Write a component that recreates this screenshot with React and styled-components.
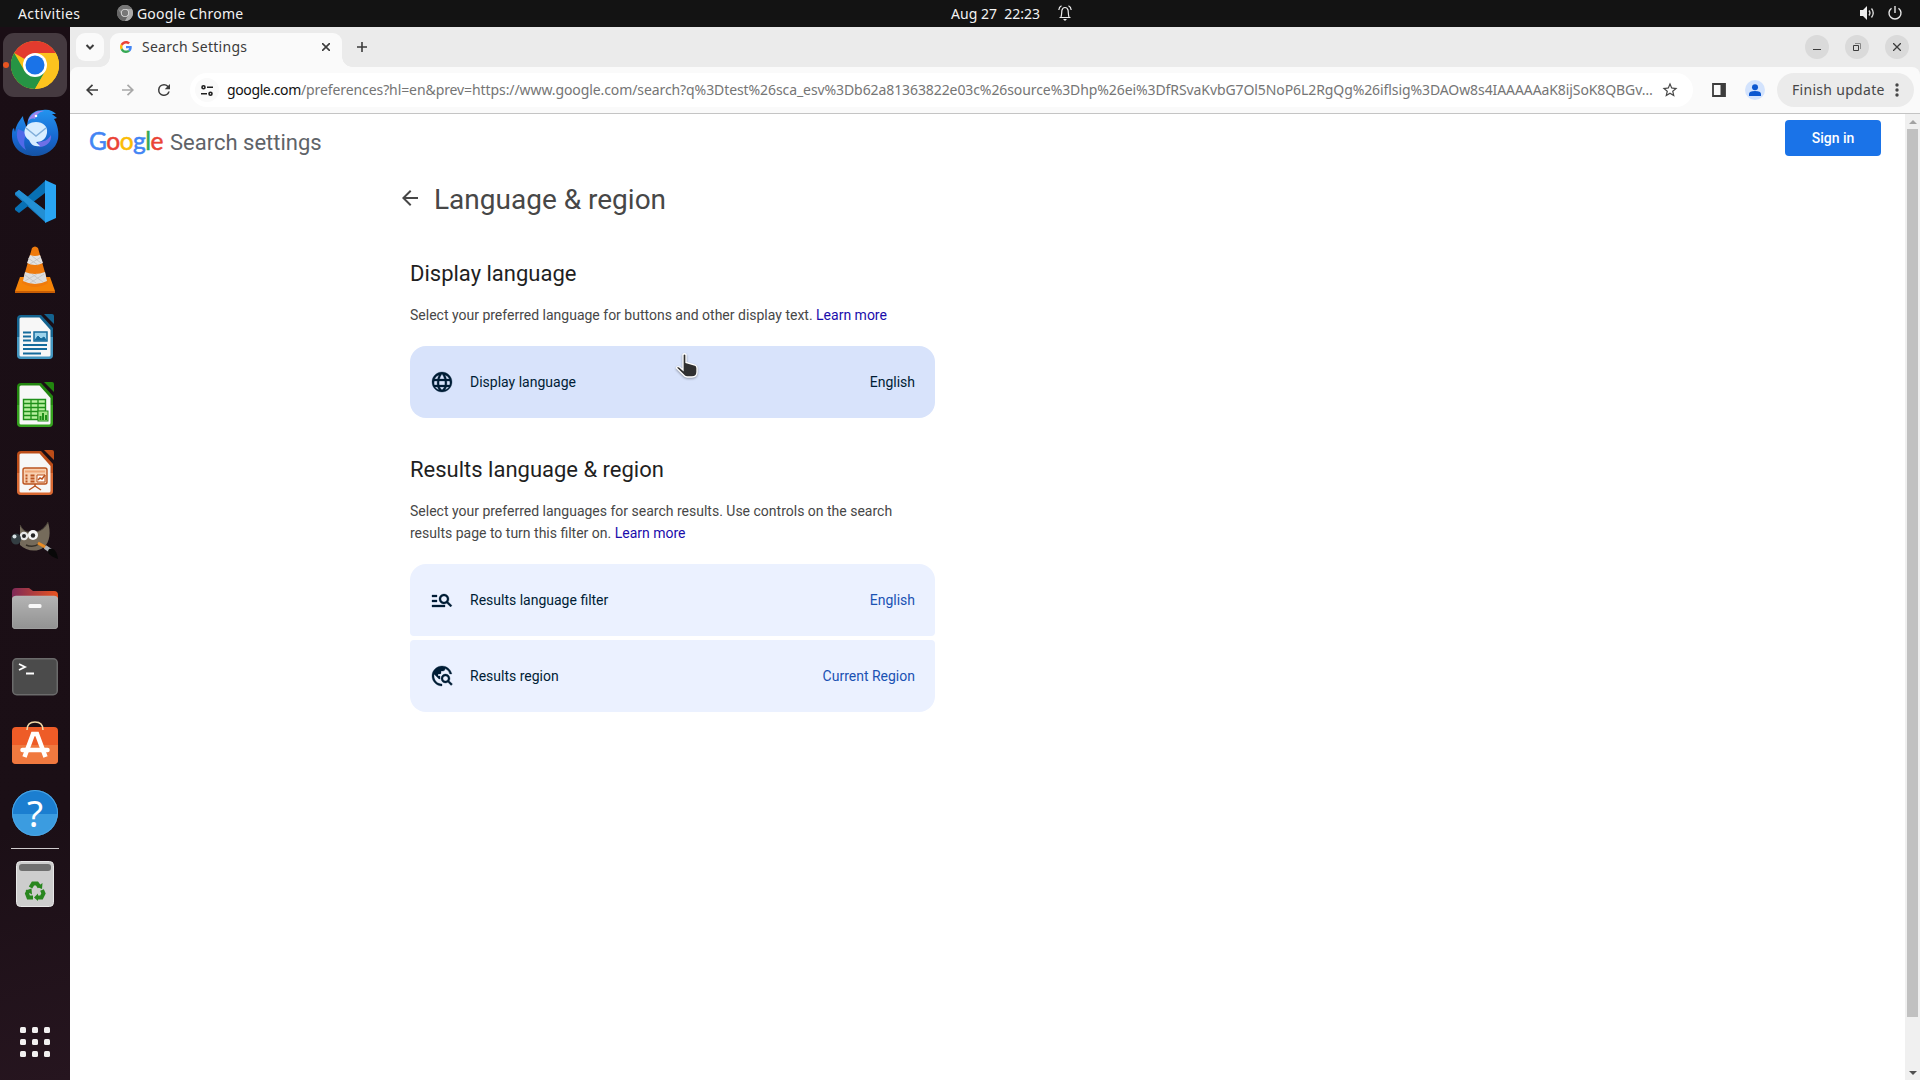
import React from "react";
import styled, { createGlobalStyle } from "styled-components";

const Global = createGlobalStyle`
  *{box-sizing:border-box}
  html,body{margin:0;padding:0;overflow:hidden}
  body{font-family:Roboto,"Liberation Sans",sans-serif;background:#fff}
  h1,h2,p{margin:0;font-weight:400}
  svg{display:block;flex:none}
`;
const ui = `"Noto Sans","Open Sans",sans-serif`;

const Desktop = styled.div`width:1920px;height:1080px;display:flex;flex-direction:column;overflow:hidden;`;
const TopBar = styled.header`height:27px;flex:none;background:#131313;color:#f2f2f2;display:grid;grid-template-columns:1fr auto 1fr;align-items:center;padding-bottom:1px;font-family:${ui};font-size:14px;line-height:25px;`;
const BarGroup = styled.div`display:flex;align-items:center;padding:${p => p.$pad || 0};justify-content:${p => p.$end ? "flex-end" : "flex-start"};gap:${p => p.$gap || 0}px;`;
const Label = styled.span`white-space:pre;display:block;width:${p => p.$w ? p.$w + "px" : "auto"};letter-spacing:${p => p.$ls || 0}px;font-size:14px;`;
const Body = styled.div`flex:1;display:flex;min-height:0;`;

const Dock = styled.nav`width:70px;flex:none;background:linear-gradient(165deg,#1a0e15 0%,#1b0f16 75%,#26151f 100%);display:flex;flex-direction:column;align-items:center;padding-top:6px;`;
const DockItem = styled.div`width:64px;height:64px;flex:none;margin-bottom:4px;border-radius:11px;display:flex;align-items:center;justify-content:center;background:${p => p.$active ? "#453a40" : "transparent"};position:relative;padding-bottom:${p => p.$lift || 0}px;`;
const RunDot = styled.i`position:absolute;left:0;top:29px;width:6px;height:6px;border-radius:3px;background:#e95420;`;
const DockLine = styled.hr`width:48px;height:1px;border:0;margin:-1px 0 3px;background:#cfcbcd;flex:none;`;
const AppsButton = styled.div`margin-top:auto;margin-bottom:23px;display:grid;grid-template-columns:repeat(3,6px);gap:6px;`;
const AppDot = styled.i`width:6px;height:6px;border-radius:1.5px;background:#f2f0f0;`;

const Browser = styled.main`flex:1;min-width:0;display:flex;flex-direction:column;background:#fff;`;
const TabStrip = styled.div`height:40px;flex:none;background:#ebebeb;display:flex;padding:6px 11px 0 6px;`;
const TabSearch = styled.div`width:28px;height:28px;border-radius:9px;background:#fafafa;display:flex;align-items:center;justify-content:center;`;
const Tab = styled.div`margin-left:6px;width:232px;height:34px;background:#fafafa;border-radius:9px 9px 0 0;display:flex;padding:0 12px 6px 10px;align-items:center;font-family:${ui};color:#3c3c3c;position:relative;
  &::before,&::after{content:"";position:absolute;bottom:0;width:10px;height:10px;}
  &::before{left:-10px;background:radial-gradient(circle at 0 0,transparent 9.5px,#fafafa 10px);}
  &::after{right:-10px;background:radial-gradient(circle at 100% 0,transparent 9.5px,#fafafa 10px);}`;
const TabTitle = styled(Label)`margin-left:10px;flex:1;padding-bottom:2px;`;
const NewTab = styled.div`width:28px;height:28px;margin-left:6px;display:flex;align-items:center;justify-content:center;`;
const WindowButtons = styled.div`margin-left:auto;display:flex;gap:16px;padding-top:2px;`;
const WinButton = styled.div`width:24px;height:24px;border-radius:12px;background:#dadada;display:flex;align-items:center;justify-content:center;`;
const ToolbarShell = styled.div`background:#ebebeb;`;
const Toolbar = styled.div`height:47px;flex:none;background:#fafafa;border-bottom:1px solid #c4c4c4;display:flex;align-items:center;padding:0 6px 0 12px;border-radius:8px 8px 0 0;`;
const NavButton = styled.div`width:20px;height:20px;margin-right:16px;display:flex;align-items:center;justify-content:center;`;
const AddressBar = styled.div`width:1503px;height:34px;border-radius:17px;background:#fff;display:flex;align-items:center;padding:0 14px 0 5px;`;
const SiteInfo = styled.div`width:24px;height:24px;flex:none;border-radius:12px;background:#fafafa;display:flex;align-items:center;justify-content:center;`;
const Url = styled.div`margin-left:8px;width:1430px;flex:none;margin-right:4px;padding-bottom:2px;font-family:${ui};font-size:14px;color:#757575;white-space:nowrap;letter-spacing:-.09px;b{font-weight:400;color:#111;letter-spacing:-.38px}`;
const Avatar = styled.div`width:20px;height:20px;border-radius:10px;background:#d3e3fd;margin-left:19px;overflow:hidden;`;
const PanelToggle = styled.div`margin-left:19px;`;
const Update = styled.div`margin-left:12px;width:137px;height:34px;border-radius:17px;background:#ebebeb;display:flex;align-items:center;justify-content:space-between;padding:0 15px;font-family:${ui};color:#474747;${Label}{padding-bottom:2px}`;

const Viewport = styled.div`flex:1;min-height:0;display:flex;`;
const Page = styled.section`flex:1;display:flex;flex-direction:column;`;
const PageHeader = styled.header`height:56px;display:flex;align-items:flex-start;padding:6px 24px 0 19px;`;
const Wordmark = styled.div`font:400 24.5px/32px Lato,sans-serif;letter-spacing:-.5px;width:81px;padding-top:5px;-webkit-text-stroke:.5px;`;
const Letter = styled.span`color:${p => p.$c};`;
const HeaderTitle = styled.div`font-size:22px;line-height:34px;padding-top:6px;color:#5f6368;`;
const SignIn = styled.div`margin-left:auto;width:96px;height:36px;border-radius:4px;background:#1a73e8;color:#fff;font-weight:500;font-size:14px;line-height:36px;text-align:center;`;
const Settings = styled.div`width:540px;margin-left:325px;`;
const TitleRow = styled.div`display:flex;align-items:flex-start;height:59px;gap:12px;padding:16px 0 0 3px;`;
const Title = styled.h1`font-size:28px;line-height:36px;margin-top:-4px;color:#474747;`;
const Section = styled.div`margin:${p => p.$mt}px 0 0 15px;width:525px;`;
const Heading = styled.h2`font-size:22px;line-height:28px;color:#1f1f1f;`;
const Text = styled.p`font-size:14px;line-height:22px;color:#474747;margin-top:16px;`;
const Link = styled.a`color:#1a0dab;`;
const Rows = styled.div`margin-top:20px;display:flex;flex-direction:column;gap:4px;border-radius:16px;overflow:hidden;`;
const Row = styled.div`height:72px;display:flex;align-items:center;padding:0 20px;font-size:14px;color:#001d35;background:${p => p.$hover ? "#d8e3fb" : "#ebf1ff"};border-radius:4px;position:relative;svg path{stroke:currentColor;stroke-width:.3}`;
const RowName = styled.span`margin-left:16px;flex:1;`;
const RowValue = styled.span`color:${p => p.$hover ? "#001d35" : "#1a52b3"};`;
const Pointer = styled.svg`position:absolute;left:265px;top:6px;filter:drop-shadow(0 1px 1px rgba(0,0,0,.35));&& path{stroke:#fff;stroke-width:1.3}`;
const Scrollbar = styled.div`width:15px;background:#f0f0f0;display:flex;flex-direction:column;align-items:center;`;
const ScrollArrow = styled.div`height:15px;display:flex;align-items:center;color:${p => p.$c};`;
const Thumb = styled.div`width:11px;height:888px;background:#c1c1c1;margin-bottom:auto;`;

const ChromeLogo = ({ size = 48, mono }) => (
  <svg width={size} height={size} viewBox="0 0 48 48">
    <circle cx="24" cy="24" r="24" fill={mono ? "#8d8d8d" : "#fbc116"} />
    <path d="M24 24 3.2 12A24 24 0 0 1 44.8 12z" fill={mono ? "#777" : "#e33b2e"} />
    <path d="M3.2 12A24 24 0 0 0 24 48L34.4 30 24 24 13.6 30z" fill={mono ? "#666" : "#269444"} />
    <path d="M44.8 12H24v12l10.4 6L24 48A24 24 0 0 0 44.8 12z" fill={mono ? "#aaa" : "#fcc31e"} />
    <circle cx="24" cy="24" r="12" fill={mono ? "#ddd" : "#fff"} />
    <circle cx="24" cy="24" r="9.5" fill={mono ? "#777" : "#1a73e8"} />
  </svg>
);
const Thunderbird = () => (
  <svg width="48" height="48" viewBox="0 0 48 48">
    <defs><linearGradient id="tb" x1="0" y1="0" x2="0" y2="1"><stop offset="0" stopColor="#2494ee" /><stop offset=".6" stopColor="#1768d2" /><stop offset="1" stopColor="#1552a3" /></linearGradient></defs>
    <path d="M17 11C19 4 25 1 32 1c6-1 10 1 13 4l-4 0 5 4-3 1c4 6 5 14 4 20-2 10-12 17-23 17C10 47 1 38 1 27c0-4 0-7 2-8l1 4C5 16 8 12 12 7c0 5 4 8 3 14z" fill="url(#tb)" />
    <path d="M17 12C20 4 27 1 33 2c-5 1-8 4-9 8-3-1-5 0-7 2z" fill="#9a86ef" />
    <path d="M7 20c-3 7 0 16 8 21-3-6-2-12 1-17z" fill="#5069e8" />
    <path d="M28 38c8 0 13-6 12-12-3 5-7 7-13 7z" fill="#6d70e7" />
    <circle cx="25" cy="7" r="1.3" fill="#fff" />
    <path d="M25 13c7 0 12 4 11 11-1 6-5 9-11 9l4 4c-7 1-9-2-11-6-8-5-5-18 7-18z" fill="#d8edff" />
    <path d="m15 19 10 8 10-8" fill="none" stroke="#80aeda" strokeWidth="1.5" />
  </svg>
);
const Code = () => (
  <svg width="42" height="43" viewBox="0 0 42 43">
    <path d="m1 13 4-3 26 20v12L1 15z" fill="#1b7cc0" />
    <path d="m1 30 4 3L31 13V1L1 28z" fill="#0870b4" />
    <path d="M1 13 5 10 32 31v11z" fill="#238fd3" />
    <path d="M31 0 42 5v33l-11 5z" fill="#29a5f3" />
  </svg>
);
const Vlc = () => (
  <svg width="42" height="47" viewBox="0 0 42 47">
    <path d="M6 31h30l5 14v2H1v-2z" fill="#f58408" />
    <path d="M1 45h40v2H1z" fill="#c95f05" />
    <path d="M18 2q3-3 6 0l10 35q-13 8-26 0z" fill="#ef7b0d" />
    <path d="m16 9-3 8q8 4 16 0l-3-8q-5 2-10 0z" fill="#e3e3e3" />
    <path d="m11 26-2 9q12 6 24 0l-2-9q-10 4-20 0z" fill="#dedede" />
    <path d="m14 12 10 7M18 10l9 7m0-6-11 7M11 29l11 8m-4-9 11 8m1-8-14 9m7-9L11 35" stroke="#c2c2c2" strokeWidth=".8" />
  </svg>
);
const Office = ({ c, light, kind }) => (
  <svg width="38" height="46" viewBox="0 0 38 46">
    <path d="M5 1h20l12 13v27a4 4 0 0 1-4 4H5a4 4 0 0 1-4-4V5a4 4 0 0 1 4-4z" fill={c} />
    <path d="M1 23h36v18a4 4 0 0 1-4 4H5a4 4 0 0 1-4-4z" fill={light} opacity=".55" />
    <path d="M5 3.500h18.500L34.500 16v25q0 1.500-1.500 1.500H5q-1.500 0-1.500-1.500V5q0-1.500 1.500-1.500z" fill="#f7f7f7" />
    <path d="M28 0h8q2 0 2 2v8z" fill={c} />
    {kind === "writer" && <g stroke="#156b9c" strokeWidth="2" fill="none"><path d="M7 18.500h8M7 22.500h8M7 26.500h8M7 31h24M7 35h24M7 39.500h18" /><rect x="18" y="18" width="13" height="9" fill="#9cd3ec" strokeWidth="1.500" /><path d="m19 26 3-4 3 3 3-2 2 3z" fill="#156b9c" strokeWidth="1" /></g>}
    {kind === "calc" && <g><path d="M7.500 17.500h22v20h-22z" fill="#b8f0a0" stroke="#1f8f1a" strokeWidth="1.400" /><path d="M8 21.500h21M8 25.500h21M8 29.500h21M8 33.500h21M15 18v19M22 18v19" stroke="#1f8f1a" strokeWidth="1.300" /><rect x="22" y="29" width="10" height="10" fill="#a4e588" stroke="#1f8f1a" /><path d="M24.500 38v-4m2.500 4v-7m3 7v-5" stroke="#1f8f1a" strokeWidth="2" /></g>}
    {kind === "impress" && <g stroke="#bb5420" fill="none"><rect x="7" y="18" width="24" height="16" rx="2" fill="#f8d1b2" strokeWidth="1.400" /><path d="M9 21.500h20" stroke="#efa677" strokeWidth="2" /><path d="M9.500 25.500h2m-2 3h2m-2 3h2m3-6h4m-4 3h4m-4 3h4" strokeWidth="2" /><path d="M21 25h8v7h-8z" fill="#fff" /><path d="m22 30 2-2 2 1 3-4M19 34v2m0 0-6 4m6-4 6 4" strokeWidth="1.500" /></g>}
  </svg>
);
const Gimp = () => (
  <svg width="48" height="38" viewBox="0 0 48 38">
    <path d="M9 3q4 8 10 7c8 1 14-2 18-10 3 10 2 20-4 25-7 6-18 4-24-2z" fill="#756b5b" />
    <path d="M9 3q4 8 10 7c8 1 14-2 18-10" fill="none" stroke="#494238" />
    <circle cx="13" cy="14" r="4.200" fill="#e8e8e8" /><circle cx="22" cy="13" r="5" fill="#f6f6f6" /><circle cx="13" cy="14" r="2" fill="#252525" /><circle cx="22" cy="13.500" r="2.200" fill="#252525" />
    <ellipse cx="5" cy="17" rx="5" ry="5.500" fill="#333d42" /><circle cx="3.500" cy="14.500" r="2" fill="#d8e0e4" />
    <path d="M15 23q7 3 13-1" fill="none" stroke="#353027" strokeWidth="1.500" />
    <path d="m27 21 9 5" stroke="#e98c25" strokeWidth="3" /><path d="m34 25 6 4" stroke="#aeb4b9" strokeWidth="4" /><path d="M38 27c5-1 8 2 9 10-5-2-10-4-10-8z" fill="#080808" />
  </svg>
);
const Files = () => (
  <svg width="46" height="41" viewBox="0 0 46 41">
    <defs><linearGradient id="fo"><stop stopColor="#7e2957" /><stop offset="1" stopColor="#e95420" /></linearGradient><linearGradient id="fg" x2="0" y2="1"><stop stopColor="#b4b4b4" /><stop offset="1" stopColor="#929292" /></linearGradient></defs>
    <path d="M4 0h13l4 3h21q4 0 4 4v13H0V4q0-4 4-4z" fill="url(#fo)" /><rect y="8" width="46" height="33" rx="4" fill="url(#fg)" stroke="#bdbdbd" strokeWidth=".5" /><rect x="16.500" y="16" width="13" height="4" rx="1.500" fill="#f8f8f8" />
  </svg>
);
const Terminal = () => (
  <svg width="46" height="38" viewBox="0 0 46 38"><rect x=".75" y=".75" width="44.500" height="36" rx="4" fill="#4b4b4b" stroke="#6b6b6b" strokeWidth="1.500" /><path d="m7 6 6 3-6 3M14 15.500h8" fill="none" stroke="#fff" strokeWidth="1.800" /></svg>
);
const Software = () => (
  <svg width="46" height="43" viewBox="0 0 46 43"><rect y="6" width="46" height="37" rx="4" fill="#ee5c27" /><path d="M0 24h46v15a4 4 0 0 1-4 4H4a4 4 0 0 1-4-4z" fill="#f0793f" /><path d="M15 9q0-8 8-8t8 8" fill="none" stroke="#f0d8a8" strokeWidth="1.600" /><path d="M12.500 36 21 13h4l8.500 23" fill="none" stroke="#fff" strokeWidth="4.500" /><path d="M10.500 29h25" stroke="#fff" strokeWidth="4.500" strokeLinecap="round" /></svg>
);
const HelpCircle = styled.div`width:46px;height:46px;border-radius:23px;background:linear-gradient(#1b7ed0 0 52%,#3b9ce0 52%);box-shadow:inset 0 0 0 1px #4ba5e4;color:#fff;font:400 37px/46px ${ui};text-align:center;`;
const Trash = () => (
  <svg width="38" height="46" viewBox="0 0 38 46"><rect x=".5" y=".5" width="37" height="45" rx="4" fill="#cdcdcd" stroke="#e8e8e8" /><rect x="3" y="3" width="32" height="7" rx="3" fill="#707070" /><g transform="translate(0 1)"><g fill="none" stroke="#28861e" strokeWidth="4"><path d="m14.500 25.500 2.500-4h4l2.500 3.500M26 28l1.500 3.500-2 4H21M17 35.500h-4.500l-1.500-4 1.500-3" /></g><path d="m26.500 21-.5 6-5-2zM22 31.500v7.500l-4-3.500zM9.500 28.500l6-2 .5 6z" fill="#28861e" /></g></svg>
);
const GoogleG = () => (
  <svg width="12" height="12" viewBox="0 0 48 48"><path fill="#ea4335" d="M24 9.500c3.540 0 6.710 1.220 9.210 3.600l6.850-6.850C35.900 2.380 30.470 0 24 0 14.620 0 6.510 5.380 2.560 13.220l7.980 6.190C12.430 13.720 17.740 9.500 24 9.500z" /><path fill="#4285f4" d="M46.980 24.550c0-1.570-.15-3.090-.38-4.550H24v9.020h12.940c-.58 2.960-2.260 5.480-4.780 7.180l7.730 6c4.510-4.180 7.090-10.360 7.090-17.650z" /><path fill="#fbbc05" d="M10.530 28.590c-.48-1.450-.76-2.990-.76-4.590s.27-3.140.76-4.590l-7.980-6.190C.92 16.460 0 20.120 0 24s.92 7.540 2.560 10.780z" /><path fill="#34a853" d="M24 48c6.480 0 11.930-2.130 15.890-5.810l-7.730-6c-2.150 1.450-4.920 2.300-8.160 2.300-6.260 0-11.570-4.220-13.470-9.910l-7.980 6.190C6.510 42.620 14.620 48 24 48z" /></svg>
);
const Icon = ({ d, size = 24, fill = "currentColor", vb = "0 0 24 24" }) => <svg width={size} height={size} viewBox={vb}><path d={d} fill={fill} /></svg>;
const Stroke = ({ d, w = 16, h, c = "#3c3c3c", sw = 2 }) => <svg width={w} height={h || w} viewBox={`0 0 ${w} ${h || w}`}><path d={d} fill="none" stroke={c} strokeWidth={sw} /></svg>;

const backPath = "M20 11H7.83l5.590-5.590L12 4l-8 8 8 8 1.410-1.410L7.830 13H20z";
const globe = "M12 2C6.480 2 2 6.480 2 12s4.480 10 10 10 10-4.480 10-10S17.520 2 12 2zM19.450 9h-2.950a15 15 0 0 0-1.450-4A8 8 0 0 1 19.450 9zM12 4.100A12.500 12.500 0 0 1 14.450 9h-4.900A12.500 12.500 0 0 1 12 4.100zM4.550 9A8 8 0 0 1 8.950 5a15 15 0 0 0-1.450 4zM4.300 15a8 8 0 0 1 0-4h2.900a20 20 0 0 0 0 4zM4.900 17h2.600a15 15 0 0 0 1.450 3A8 8 0 0 1 4.900 17zM12 19.900A12 12 0 0 1 9.600 17h4.800A12 12 0 0 1 12 19.900zM14.800 15H9.200a18 18 0 0 1 0-4h5.600a18 18 0 0 1 0 4zM15.050 20a15 15 0 0 0 1.450-3h2.600A8 8 0 0 1 15.050 20zM16.800 15a20 20 0 0 0 0-4h2.900a8 8 0 0 1 0 4z";
const manage = "M7 9H2V7h5v2zm0 3H2v2h5v-2zm13.590 7-3.830-3.830c-.8.520-1.740.83-2.760.83-2.760 0-5-2.240-5-5s2.240-5 5-5 5 2.240 5 5c0 1.020-.31 1.960-.83 2.750L22 17.590 20.590 19zM17 11c0-1.650-1.350-3-3-3s-3 1.350-3 3 1.350 3 3 3 3-1.350 3-3zM2 19h13v-2H2v2z";
const travel = "M19.300 16.900c.4-.7.7-1.500.7-2.400 0-2.500-2-4.500-4.500-4.500S11 12 11 14.500s2 4.500 4.500 4.500c.9 0 1.700-.3 2.400-.7l3.200 3.200 1.400-1.400-3.200-3.200zm-3.800.1c-1.400 0-2.500-1.100-2.500-2.500s1.100-2.500 2.500-2.500 2.500 1.100 2.500 2.500-1.100 2.500-2.500 2.500zM12 20v2C6.480 22 2 17.520 2 12S6.480 2 12 2c4.840 0 8.870 3.440 9.800 8h-2.070A8 8 0 0 0 15 4.590V5c0 1.100-.9 2-2 2h-2v2c0 .55-.45 1-1 1H8v2h2v3H9l-4.790-4.790C4.080 10.790 4 11.380 4 12c0 4.410 3.590 8 8 8z";

const apps = [
  { icon: <Thunderbird /> }, { icon: <Code /> }, { icon: <Vlc /> },
  { icon: <Office kind="writer" c="#14638f" light="#69bfe8" /> },
  { icon: <Office kind="calc" c="#22860f" light="#46b82b" /> },
  { icon: <Office kind="impress" c="#bb4c18" light="#f0814a" /> },
  { icon: <Gimp /> }, { icon: <Files />, lift: 2 }, { icon: <Terminal /> },
  { icon: <Software />, lift: 6 }, { icon: <HelpCircle>?</HelpCircle> },
];

export default function App() {
  return (
    <Desktop>
      <Global />
      <TopBar>
        <BarGroup $pad="0 0 0 18px">
          <Label $w={99} $ls={0.4}>Activities</Label>
          <ChromeLogo size={16} mono />
          <Label $ls={0.24}>{" "}Google Chrome</Label>
        </BarGroup>
        <BarGroup $gap={18} $pad="0 0 0 103px">
          <Label>Aug 27  22:23</Label>
          <svg width="14" height="16" viewBox="0 0 14 16"><path d="M1.500 12.500h11M3 12c1-3 .5-5 1-7q.7-2.500 3-2.500T10 5c.5 2 0 4 1 7M.8 5Q1 2 3.500.800M13.200 5Q13 2 10.500.800" fill="none" stroke="#eee" strokeWidth="1.200" /><path d="M5 14h4l-2 2z" fill="#eee" /></svg>
        </BarGroup>
        <BarGroup $end $gap={12} $pad="0 18px 0 0">
          <svg width="16" height="14" viewBox="0 0 16 14"><path d="M0 4h3l4-4v14l-4-4H0z" fill="#eee" /><path d="M9 4.500q2 2.500 0 5M11.500 2.500q3.500 4.500 0 9" fill="none" stroke="#ddd" strokeWidth="1.300" /></svg>
          <Stroke w={14} c="#e6e6e6" sw={1.4} d="M7 0v7M3.500 2.200a6 6 0 1 0 7 0" />
        </BarGroup>
      </TopBar>
      <Body>
        <Dock>
          <DockItem $active><RunDot /><ChromeLogo /></DockItem>
          {apps.map((a, i) => <DockItem key={i} $lift={a.lift}>{a.icon}</DockItem>)}
          <DockLine />
          <DockItem><Trash /></DockItem>
          <AppsButton>{Array.from({ length: 9 }, (_, i) => <AppDot key={i} />)}</AppsButton>
        </Dock>
        <Browser>
          <TabStrip>
            <TabSearch><Stroke w={10} h={10} d="M1.500 3 5 6.500 8.500 3" /></TabSearch>
            <Tab>
              <GoogleG />
              <TabTitle $ls={0.27}>Search Settings</TabTitle>
              <Stroke w={8} sw={1.6} d="m0 0 8 8M8 0 0 8" />
            </Tab>
            <NewTab><Stroke w={10} sw={1.6} d="M5 0v10M0 5h10" /></NewTab>
            <WindowButtons>
              <WinButton><Stroke w={8} sw={1} d="M0 6.500h8" /></WinButton>
              <WinButton><svg width="8" height="8" viewBox="0 0 8 8" fill="none" stroke="#3c3c3c"><path d="M.5 2.500h5v5h-5z" /><path d="M2 .500h5.500V6" stroke="#888" /></svg></WinButton>
              <WinButton><Stroke w={8} sw={1.3} d="m0 0 8 8M8 0 0 8" /></WinButton>
            </WindowButtons>
          </TabStrip>
          <ToolbarShell>
            <Toolbar>
              <NavButton><Stroke w={12} sw={1.7} d="M12 6H1M6.500.800 1.200 6l5.300 5.200" /></NavButton>
              <NavButton><Stroke w={12} sw={1.7} c="#a8a8a8" d="M0 6h11M5.500.800 10.800 6l-5.300 5.200" /></NavButton>
              <NavButton><Icon size={18} fill="#3c3c3c" d="M17.650 6.350A7.960 7.960 0 0 0 12 4a8 8 0 1 0 7.730 10h-2.080A6 6 0 1 1 12 6c1.660 0 3.140.69 4.220 1.780L13 11h7V4z" /></NavButton>
              <AddressBar>
                <SiteInfo><svg width="12" height="11" viewBox="0 0 12 11" fill="none" stroke="#1f1f1f" strokeWidth="1.600"><circle cx="2.500" cy="2.300" r="1.500" /><path d="M6 2.300h6M0 8.700h6" /><circle cx="9.500" cy="8.700" r="1.500" /></svg></SiteInfo>
                <Url><b>google.com</b>/preferences?hl=en&amp;prev=https://www.google.com/search?q%3Dtest%26sca_esv%3Db62a81363822e03c%26source%3Dhp%26ei%3DfRSvaKvbG7Ol5NoP6L2RgQg%26iflsig%3DAOw8s4IAAAAAaK8ijSoK8QBGv…</Url>
                <Icon size={18} fill="#474747" d="m22 9.240-7.190-.62L12 2 9.190 8.630 2 9.240l5.460 4.730L5.820 21 12 17.270 18.180 21l-1.630-7.030zM12 15.400l-3.760 2.270 1-4.280-3.320-2.880 4.380-.38L12 6.100l1.710 4.040 4.380.38-3.320 2.880 1 4.280z" />
              </AddressBar>
              <PanelToggle><svg width="14" height="14" viewBox="0 0 14 14"><path d="M1 1h12v12H1z" fill="none" stroke="#3c3c3c" strokeWidth="1.800" /><path d="M8.500 1H13v12H8.500z" fill="#3c3c3c" /></svg></PanelToggle>
              <Avatar><svg width="20" height="20" viewBox="0 0 20 20"><circle cx="10" cy="7.300" r="3" fill="#0b57d0" /><path d="M4 16v-2q0-3 6-3t6 3v2z" fill="#0b57d0" /></svg></Avatar>
              <Update><Label $ls={0.3}>Finish update</Label><svg width="4" height="14" viewBox="0 0 4 14" fill="#474747"><circle cx="2" cy="2" r="1.700" /><circle cx="2" cy="7" r="1.700" /><circle cx="2" cy="12" r="1.700" /></svg></Update>
            </Toolbar>
          </ToolbarShell>
          <Viewport>
            <Page>
              <PageHeader>
                <Wordmark><Letter $c="#4285f4">G</Letter><Letter $c="#ea4335">o</Letter><Letter $c="#fbbc05">o</Letter><Letter $c="#4285f4">g</Letter><Letter $c="#34a853">l</Letter><Letter $c="#ea4335">e</Letter></Wordmark>
                <HeaderTitle>Search settings</HeaderTitle>
                <SignIn>Sign in</SignIn>
              </PageHeader>
              <Settings>
                <TitleRow>
                  <Icon size={24} fill="#474747" d={backPath} />
                  <Title>Language &amp; region</Title>
                </TitleRow>
                <Section $mt={31}>
                  <Heading>Display language</Heading>
                  <Text>Select your preferred language for buttons and other display text. <Link>Learn more</Link></Text>
                  <Rows>
                    <Row $hover>
                      <Icon d={globe} /><RowName>Display language</RowName><RowValue $hover>English</RowValue>
                      <Pointer width="24" height="28" viewBox="0 0 24 28"><path d="M8 2.500q1.500-1.500 3 0v8l9 2.500q2 1 2 3v4q0 5-5 5h-5q-2 0-4-2.500L1.500 16q.5-2 3-1L8 18z" fill="#303030" /></Pointer>
                    </Row>
                  </Rows>
                </Section>
                <Section $mt={38}>
                  <Heading>Results language &amp; region</Heading>
                  <Text>Select your preferred languages for search results. Use controls on the search results page to turn this filter on. <Link>Learn more</Link></Text>
                  <Rows>
                    <Row><Icon d={manage} /><RowName>Results language filter</RowName><RowValue>English</RowValue></Row>
                    <Row><Icon d={travel} /><RowName>Results region</RowName><RowValue>Current Region</RowValue></Row>
                  </Rows>
                </Section>
              </Settings>
            </Page>
            <Scrollbar>
              <ScrollArrow $c="#a3a3a3"><svg width="8" height="4"><path d="M0 4 4 0l4 4z" fill="currentColor" /></svg></ScrollArrow>
              <Thumb />
              <ScrollArrow $c="#505050"><svg width="8" height="4"><path d="m0 0 4 4 4-4z" fill="currentColor" /></svg></ScrollArrow>
            </Scrollbar>
          </Viewport>
        </Browser>
      </Body>
    </Desktop>
  );
}
